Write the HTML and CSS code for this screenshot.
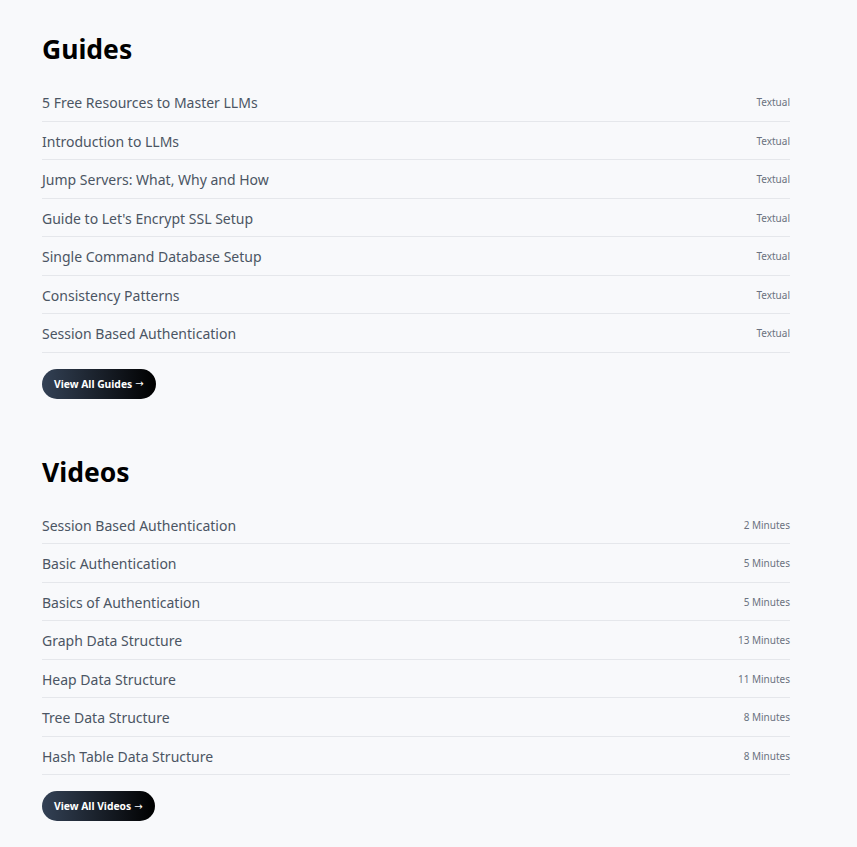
FILE: index.html
```html
<!DOCTYPE html>
<html lang="en">
<head>
<meta charset="utf-8">
<title>Guides and Videos</title>
<link rel="stylesheet" href="styles.css">
</head>
<body>
<main class="page">
  <section class="section">
    <h2 class="section-title">Guides</h2>
    <ul class="list">
      <li class="row"><span class="row-title">5 Free Resources to Master LLMs</span><span class="row-meta">Textual</span></li>
      <li class="row"><span class="row-title">Introduction to LLMs</span><span class="row-meta">Textual</span></li>
      <li class="row"><span class="row-title">Jump Servers: What, Why and How</span><span class="row-meta">Textual</span></li>
      <li class="row"><span class="row-title">Guide to Let's Encrypt SSL Setup</span><span class="row-meta">Textual</span></li>
      <li class="row"><span class="row-title">Single Command Database Setup</span><span class="row-meta">Textual</span></li>
      <li class="row"><span class="row-title">Consistency Patterns</span><span class="row-meta">Textual</span></li>
      <li class="row"><span class="row-title">Session Based Authentication</span><span class="row-meta">Textual</span></li>
    </ul>
    <a class="btn" href="#">View All Guides <span class="arrow">&rarr;</span></a>
  </section>
  <section class="section">
    <h2 class="section-title">Videos</h2>
    <ul class="list">
      <li class="row"><span class="row-title">Session Based Authentication</span><span class="row-meta">2 Minutes</span></li>
      <li class="row"><span class="row-title">Basic Authentication</span><span class="row-meta">5 Minutes</span></li>
      <li class="row"><span class="row-title">Basics of Authentication</span><span class="row-meta">5 Minutes</span></li>
      <li class="row"><span class="row-title">Graph Data Structure</span><span class="row-meta">13 Minutes</span></li>
      <li class="row"><span class="row-title">Heap Data Structure</span><span class="row-meta">11 Minutes</span></li>
      <li class="row"><span class="row-title">Tree Data Structure</span><span class="row-meta">8 Minutes</span></li>
      <li class="row"><span class="row-title">Hash Table Data Structure</span><span class="row-meta">8 Minutes</span></li>
    </ul>
    <a class="btn" href="#">View All Videos <span class="arrow">&rarr;</span></a>
  </section>
</main>
</body>
</html>
```

FILE: styles.css
```css
* { box-sizing: border-box; }
html, body {
  margin: 0;
  padding: 0;
  background: #f8f9fb;
}
body {
  font-family: "Noto Sans", "Open Sans", sans-serif;
  color: #111;
}
.page {
  width: 748px;
  margin-left: 42px;
  padding-top: 31px;
  display: flex;
  flex-direction: column;
  gap: 55px;
}
.section {
  display: flex;
  flex-direction: column;
  align-items: flex-start;
}
.section-title {
  margin: 0 0 16px;
  font-size: 26.5px;
  line-height: 36px;
  font-weight: 700;
  color: #000;
}
.list {
  list-style: none;
  margin: 0 0 16px;
  padding: 0;
  width: 100%;
}
.row {
  display: flex;
  justify-content: space-between;
  align-items: center;
  padding: 11px 0 9px;
  border-bottom: 1px solid #e5e7eb;
  line-height: 17.5px;
}
.row-title {
  font-size: 14px;
  color: #4b5563;
}
.row-meta {
  font-size: 10px;
  color: #6b7280;
}
.btn {
  display: inline-flex;
  align-items: center;
  gap: 3px;
  height: 30px;
  padding: 0 12px;
  border-radius: 15px;
  background: linear-gradient(to right, #334155, #000);
  color: #fff;
  font-size: 10.3px;
  font-weight: 700;
  text-decoration: none;
}
.arrow {
  font-family: "DejaVu Sans", sans-serif;
  font-size: 10px;
  font-weight: 400;
}
```
